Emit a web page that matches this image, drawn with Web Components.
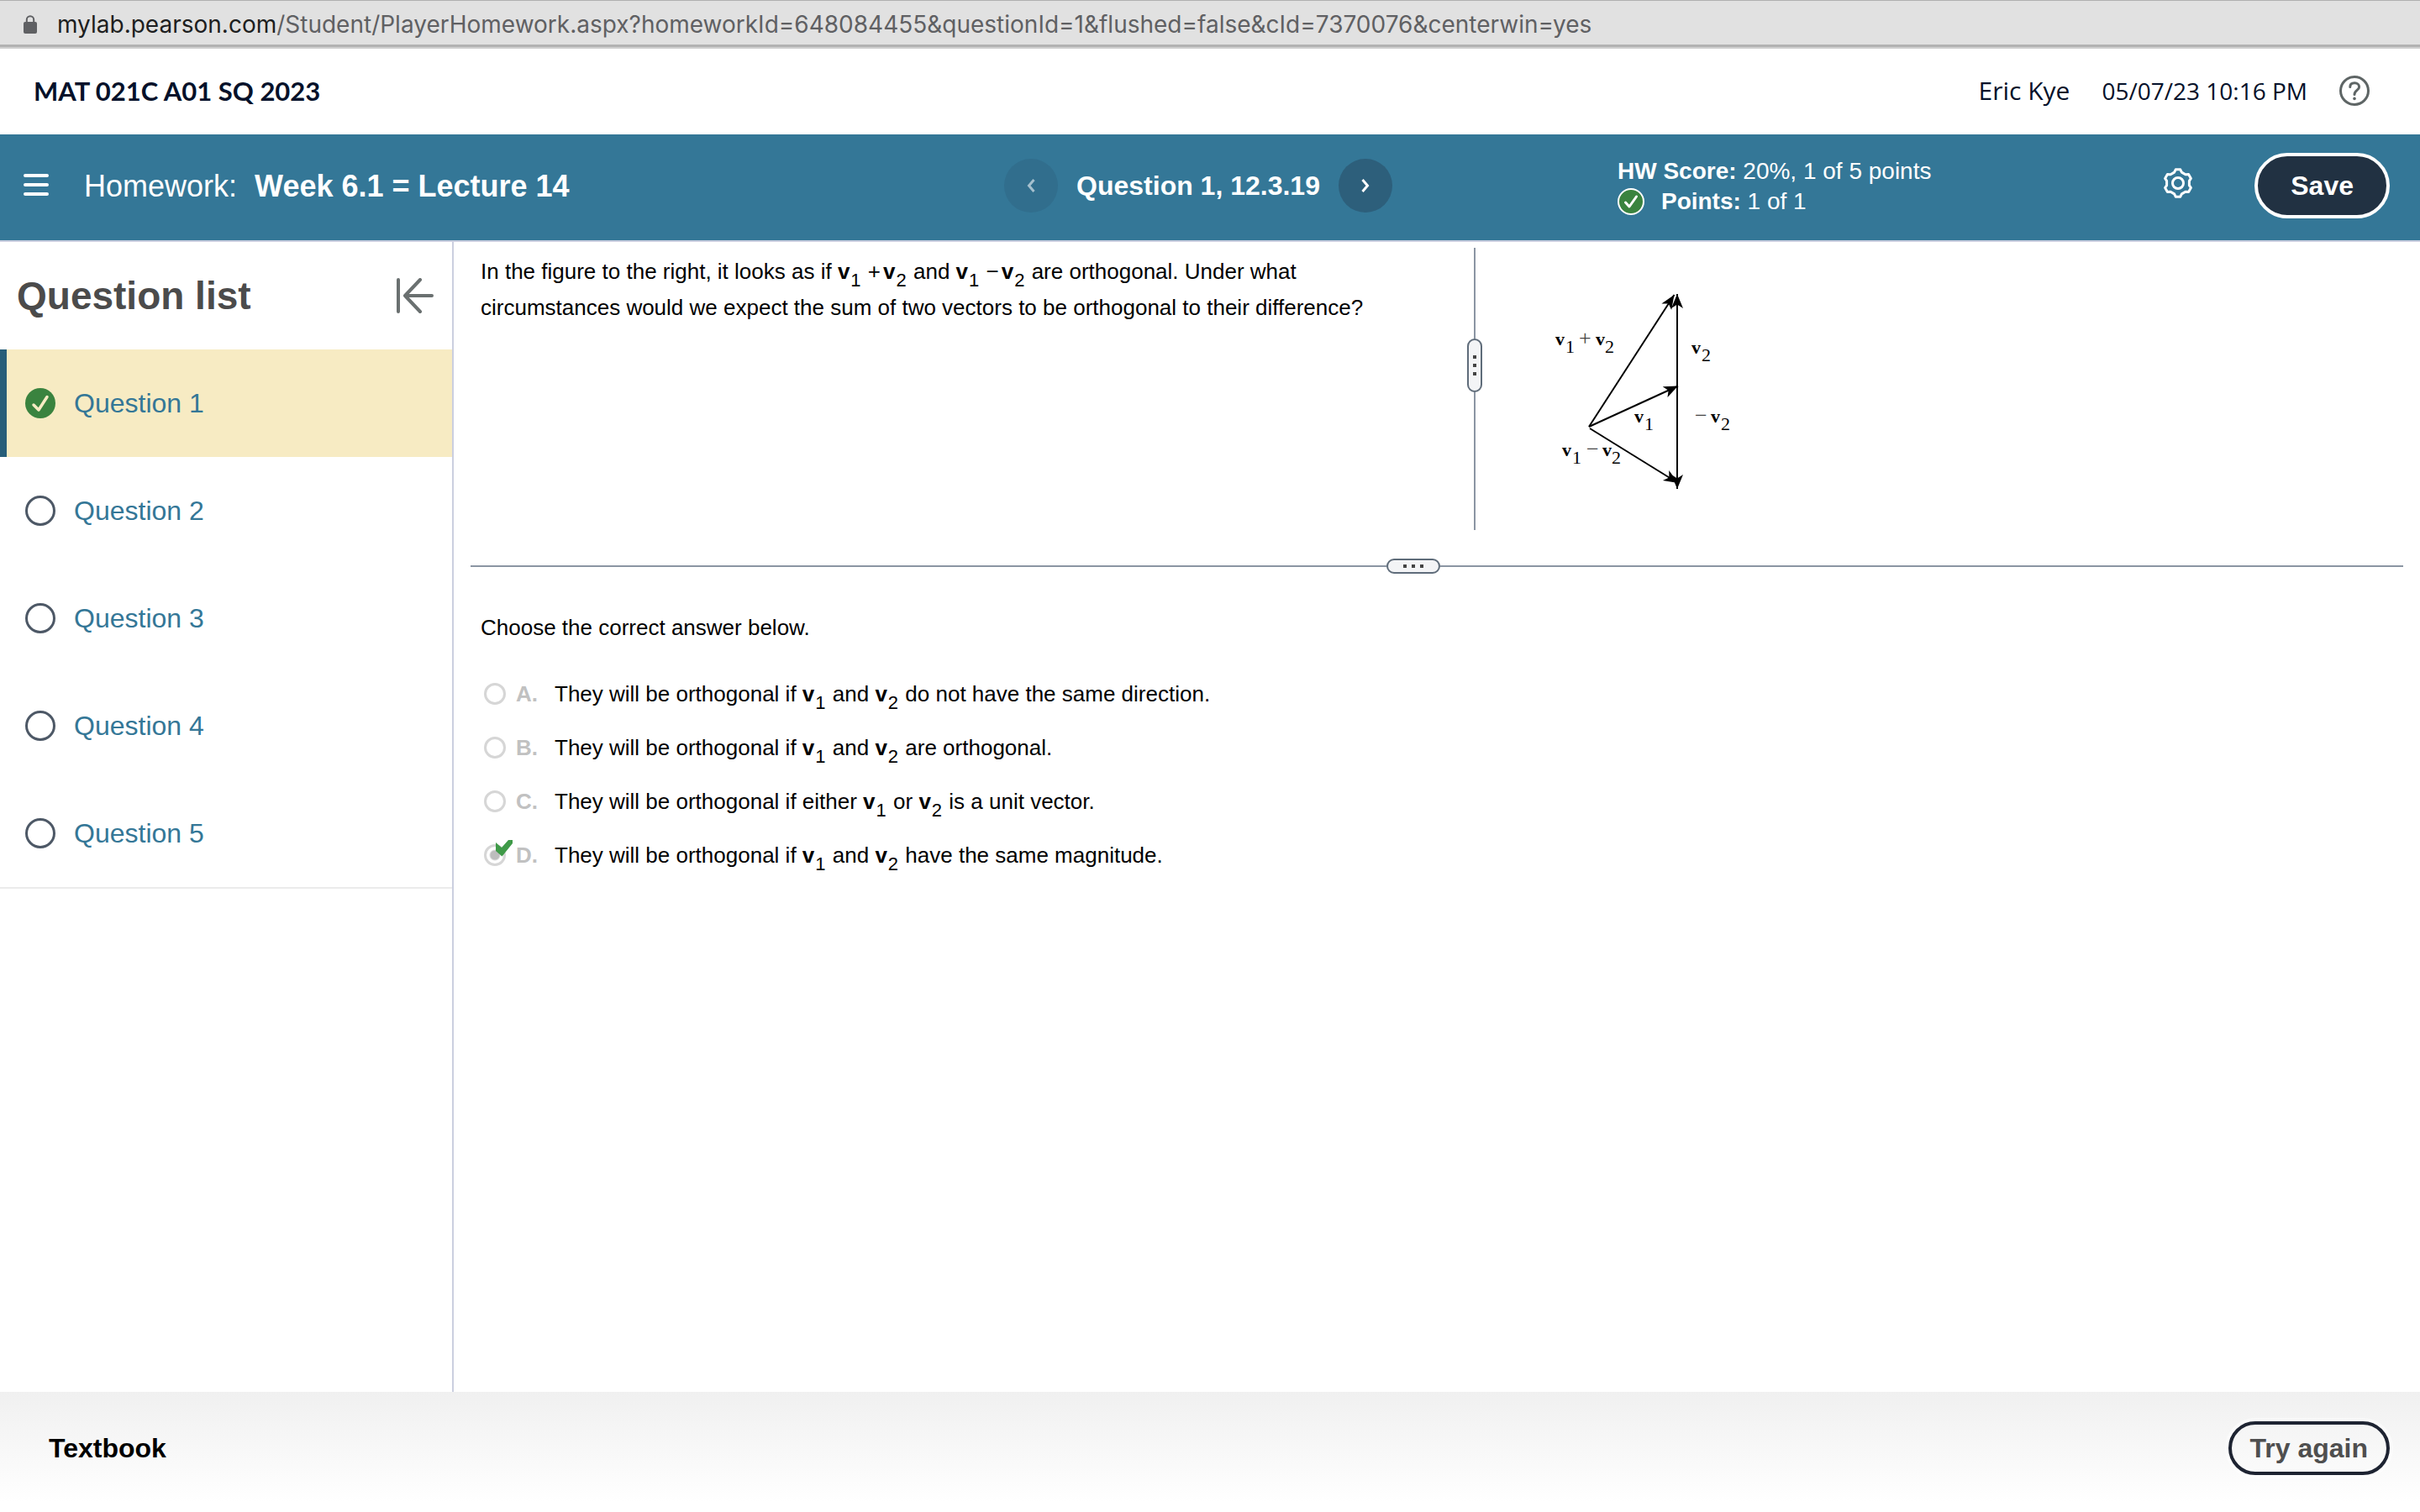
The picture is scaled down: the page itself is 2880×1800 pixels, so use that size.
<!DOCTYPE html>
<html lang="en">
<head>
<meta charset="utf-8">
<title>Homework: Week 6.1 = Lecture 14</title>
<style>
  html, body { margin: 0; }
  body {
    background: #fff;
    color: #000;
    font-family: "Liberation Sans", Arial, sans-serif;
    font-size: 26px;
  }
</style>
</head>
<body>
<homework-player></homework-player>

<script>
const define = (name, html) => {
  const template = document.createElement('template');
  template.innerHTML = html;
  customElements.define(name, class extends HTMLElement {
    constructor() {
      super();
      this.attachShadow({ mode: 'open' }).append(template.content.cloneNode(true));
    }
  });
};

/* Bold vector symbol with its subscript */
define('vec-term', `
  <style>
    :host { display: inline; }
    span { margin: 0 1px; font-size: 22px; line-height: 0; vertical-align: -9px; }
  </style>
  <b>v</b><span><slot></slot></span>`.replace(/\n\s*/g, ''));

define('url-bar', `
  <style>
    :host {
      display: flex; align-items: center; gap: 24px; box-sizing: border-box;
      height: 56px; padding: 3px 0 0 28px;
      background: #e1e1e1; border-top: 1px solid #b0b0b0; border-bottom: 3px solid #b2b2b2;
      font: 28px/36px Inter, sans-serif; color: #5f6063; white-space: nowrap;
    }
    b { font-weight: 400; color: #1d1e20; }
    svg { flex: none; }
  </style>
  <svg width="16" height="22" viewBox="0 0 16 22" aria-hidden="true">
    <path d="M3.8 9V5.5a4.2 4.2 0 0 1 8.4 0V9" fill="none" stroke="#5f6063" stroke-width="2"/>
    <rect y="8" width="16" height="14" rx="2" fill="#5f6063"/>
  </svg>
  <div><b>mylab.pearson.com</b>/Student/PlayerHomework.aspx?homeworkId=648084455&amp;questionId=1&amp;flushed=false&amp;cId=7370076&amp;centerwin=yes</div>`);

define('course-header', `
  <style>
    :host {
      display: flex; align-items: center; gap: 38px; box-sizing: border-box;
      height: 104px; padding: 0 60px 2px 40px; border-top: 2px solid #cfcfcf;
      color: #05112a; font: 28px/40px "Open Sans", sans-serif;
    }
    h1 { flex: 1; margin: 0; font: 700 31px/40px Lato, sans-serif; }
    .user { font-size: 30px; }
    button { display: block; padding: 0; border: 0; background: none; }
    svg { display: block; }
  </style>
  <h1>MAT 021C A01 SQ 2023</h1>
  <span class="user">Eric Kye</span>
  <time datetime="2023-05-07T22:16">05/07/23 10:16 PM</time>
  <button aria-label="Help">
    <svg width="36" height="36" viewBox="0 0 36 36" fill="none" stroke="#5e6565" stroke-width="3">
      <circle cx="18" cy="18" r="16.5"/>
      <path d="M12.8 13.6C12.8 10.4 15 8.8 18.2 8.8S23.6 10.6 23.6 13.4C23.6 17.6 18 17.4 18 22.6" stroke-linecap="round"/>
      <circle cx="18" cy="27.4" r="1.8" fill="#5e6565" stroke="none"/>
    </svg>
  </button>`);

define('step-button', `
  <style>
    :host { display: block; }
    button {
      display: grid; place-items: center; width: 64px; height: 64px; padding: 0;
      border: 0; border-radius: 50%; background: #2d5f7b; color: #fff;
    }
    :host([faded]) button { background: #316e8d; color: #a5c0ce; }
  </style>
  <button><slot></slot></button>`);

const gear = () => {
  const points = [];
  for (let lobe = 0; lobe < 6; lobe++) {
    for (const [offset, radius] of [[-19, 13.6], [-10, 16.4], [10, 16.4], [19, 13.6]]) {
      const angle = (lobe * 60 - 90 + offset) * Math.PI / 180;
      points.push((18 + radius * Math.cos(angle)).toFixed(1) + ',' + (18 + radius * Math.sin(angle)).toFixed(1));
    }
  }
  return points.join(' ');
};

define('assignment-bar', `
  <style>
    :host {
      display: grid; grid-template-columns: 1fr auto 1fr; align-items: center; box-sizing: border-box;
      height: 128px; padding: 0 28px 4px 0;
      background: #347797; border-bottom: 2px solid #cbcfe0; color: #fff;
    }
    .title, nav, .status { display: flex; align-items: center; }
    .title { padding: 2px 0 0 28px; font-size: 36px; line-height: 44px; }
    .title button { margin-right: 42px; }
    h2 { margin: 0 0 0 21px; font-size: 36px; }
    nav { gap: 22px; font-size: 32px; font-weight: 700; }
    .status { padding-right: 8px; }
    .score { margin: 0 auto 0 268px; padding-top: 2px; font-size: 28px; line-height: 36px; }
    .points { display: flex; align-items: center; gap: 20px; }
    .icon { display: block; padding: 0; border: 0; background: none; color: #fff; }
    .gear { margin: 0 73px 6px 0; }
    svg { display: block; }
    .save {
      height: 78px; padding: 0 39px; border: 4px solid #fff; border-radius: 39px;
      background: #213142; color: #fff; font: 700 32px "Liberation Sans", Arial, sans-serif;
    }
  </style>
  <div class="title">
    <button class="icon" aria-label="Menu">
      <svg width="30" height="30" viewBox="0 0 30 30" stroke="#fff" stroke-width="4" stroke-linecap="round">
        <path d="M2 2h26M2 13h26M2 24h26"/>
      </svg>
    </button>
    <span>Homework:</span><h2>Week 6.1 = Lecture 14</h2>
  </div>
  <nav aria-label="Questions">
    <step-button faded><svg width="10" height="16" viewBox="0 0 10 16" fill="none" stroke="currentColor" stroke-width="3"><path d="M8.5 1 2.5 8l6 7"/></svg></step-button>
    <span>Question 1, 12.3.19</span>
    <step-button><svg width="10" height="16" viewBox="0 0 10 16" fill="none" stroke="currentColor" stroke-width="3"><path d="M1.5 1l6 7-6 7"/></svg></step-button>
  </nav>
  <div class="status">
    <div class="score">
      <div><b>HW Score:</b> 20%, 1 of 5 points</div>
      <div class="points">
        <svg width="32" height="32" viewBox="0 0 32 32" fill="none" stroke="#fff">
          <circle cx="16" cy="16" r="15" fill="#3a833f" stroke-width="2"/>
          <path d="M9.5 17l4.5 5L22.5 10" stroke-width="3" stroke-linecap="round" stroke-linejoin="round"/>
        </svg>
        <div><b>Points:</b> 1 of 1</div>
      </div>
    </div>
    <button class="icon gear" aria-label="Settings">
      <svg width="36" height="36" viewBox="0 0 36 36" fill="none" stroke="#fff" stroke-width="3" stroke-linejoin="round">
        <polygon points="${gear()}"/>
        <circle cx="18" cy="18" r="6.5"/>
      </svg>
    </button>
    <button class="save">Save</button>
  </div>`);

define('question-item', `
  <style>
    :host { display: block; }
    a {
      display: flex; align-items: center; gap: 22px; box-sizing: border-box; height: 128px;
      padding-left: 22px; border-left: 8px solid transparent;
      color: #347797; font-size: 32px; text-decoration: none;
    }
    .done { display: none; }
    :host([current]) a { background: #f7ebc3; border-color: #275e79; }
    :host([current]) .done { display: block; }
    :host([current]) .open { display: none; }
  </style>
  <a href="#">
    <svg class="open" width="36" height="36" viewBox="0 0 36 36"><circle cx="18" cy="18" r="16.5" fill="#fff" stroke="#4d5866" stroke-width="3"/></svg>
    <svg class="done" width="36" height="36" viewBox="0 0 36 36"><circle cx="18" cy="18" r="18" fill="#3a833f"/><path d="M10 20l6 6L26 10.5" fill="none" stroke="#f7ebc3" stroke-width="3.5" stroke-linecap="round" stroke-linejoin="round"/></svg>
    <slot></slot>
  </a>`);

define('question-list', `
  <style>
    :host { display: block; box-sizing: border-box; width: 540px; border-right: 2px solid #cbcfe0; }
    header { display: flex; align-items: center; justify-content: space-between; height: 128px; padding: 0 22px 0 20px; }
    h2 { margin: 0; font-size: 46px; color: #4b4b4b; }
    button { padding: 0; border: 0; background: none; }
    svg { display: block; }
    nav { border-bottom: 2px solid #ebebeb; }
  </style>
  <header>
    <h2>Question list</h2>
    <button aria-label="Collapse question list">
      <svg width="44" height="42" viewBox="0 0 44 42" fill="none" stroke="#6a7070" stroke-width="4" stroke-linecap="round" stroke-linejoin="round">
        <path d="M2 2v38M42 21H10M28 2L10 21l18 19"/>
      </svg>
    </button>
  </header>
  <nav aria-label="Question list">
    <question-item current>Question 1</question-item>
    <question-item>Question 2</question-item>
    <question-item>Question 3</question-item>
    <question-item>Question 4</question-item>
    <question-item>Question 5</question-item>
  </nav>`);

/* Draggable divider: a line, a grip with three dots, a line */
define('split-bar', `
  <style>
    :host { display: flex; align-items: center; height: 18px; }
    i { height: 2px; background: #8b95a3; }
    i:first-of-type { flex: 545; }
    i:last-of-type { flex: 573; }
    button {
      display: flex; align-items: center; justify-content: center; gap: 6px; box-sizing: border-box;
      width: 64px; height: 18px; padding: 0;
      border: 2px solid #5f6c7a; border-radius: 9px; background: #f3f4f6;
    }
    span { width: 4px; height: 4px; background: #444; }
    :host([vertical]) { flex-direction: column; width: 18px; height: auto; }
    :host([vertical]) i { width: 2px; height: auto; }
    :host([vertical]) i:first-of-type { flex: 27; }
    :host([vertical]) i:last-of-type { flex: 41; }
    :host([vertical]) button { flex-direction: column; width: 18px; height: 64px; }
  </style>
  <i></i><button aria-label="Resize"><span></span><span></span><span></span></button><i></i>`);

define('vector-figure', `
  <style>
    :host { display: block; }
    svg { display: block; }
    text { font-family: "Liberation Serif", "Times New Roman", serif; font-size: 22px; fill: #000; }
    .b { font-weight: 700; }
    .op { font-size: 26px; fill: #444; }
  </style>
  <svg width="260" height="336" viewBox="0 0 260 336" role="img" aria-label="Vectors v1, v2, their sum and their difference">
    <defs>
      <marker id="tip" markerUnits="userSpaceOnUse" markerWidth="18" markerHeight="16" refX="17" refY="7" orient="auto">
        <path d="M17 7L0 0l4.5 7L0 14z"/>
      </marker>
    </defs>
    <g stroke="#000" stroke-width="2" fill="none">
      <path d="M52 213L153.5 56" marker-end="url(#tip)"/>
      <path d="M52 213L158 164.5" marker-end="url(#tip)"/>
      <path d="M53 215L158 280" marker-end="url(#tip)"/>
      <path d="M157 170V55" marker-end="url(#tip)"/>
      <path d="M157 170V287" marker-end="url(#tip)"/>
    </g>
    <text y="116"><tspan class="b" x="12">v</tspan><tspan x="24" y="125">1</tspan><tspan class="op" x="40" y="116">+</tspan><tspan class="b" x="60">v</tspan><tspan x="71" y="125">2</tspan></text>
    <text y="126"><tspan class="b" x="174">v</tspan><tspan x="186" y="135">2</tspan></text>
    <text y="208"><tspan class="op" x="178">−</tspan><tspan class="b" x="197">v</tspan><tspan x="209" y="217">2</tspan></text>
    <text y="208"><tspan class="b" x="106">v</tspan><tspan x="118" y="217">1</tspan></text>
    <text y="248"><tspan class="b" x="20">v</tspan><tspan x="32" y="257">1</tspan><tspan class="op" x="49" y="248">−</tspan><tspan class="b" x="68">v</tspan><tspan x="79" y="257">2</tspan></text>
  </svg>`);

define('answer-list', `
  <style>
    :host { display: block; }
    fieldset { margin: 0; padding: 0; border: 0; }
    legend { margin-bottom: 25px; padding: 0; line-height: 43px; }
    .row { display: flex; align-items: center; height: 64px; padding-left: 4px; }
    .mark { position: relative; display: flex; }
    input {
      appearance: none; box-sizing: border-box; width: 26px; height: 26px; margin: 0;
      border: 3px solid #d6d6d6; border-radius: 50%; background: #fff;
    }
    input:checked { background: radial-gradient(circle, #bdbdbd 5px, #fff 7px); }
    .mark svg { position: absolute; left: 14px; top: -5px; }
    label { display: flex; line-height: 43px; }
    b { box-sizing: border-box; width: 58px; padding-left: 12px; color: #c1c1c1; }
  </style>
  <fieldset>
    <legend>Choose the correct answer below.</legend>
    <div class="row"><span class="mark"><input type="radio" name="answer" id="a" disabled></span>
      <label for="a"><b>A.</b><span>They will be orthogonal if <vec-term>1</vec-term> and <vec-term>2</vec-term> do not have the same direction.</span></label></div>
    <div class="row"><span class="mark"><input type="radio" name="answer" id="b" disabled></span>
      <label for="b"><b>B.</b><span>They will be orthogonal if <vec-term>1</vec-term> and <vec-term>2</vec-term> are orthogonal.</span></label></div>
    <div class="row"><span class="mark"><input type="radio" name="answer" id="c" disabled></span>
      <label for="c"><b>C.</b><span>They will be orthogonal if either <vec-term>1</vec-term> or <vec-term>2</vec-term> is a unit vector.</span></label></div>
    <div class="row"><span class="mark"><input type="radio" name="answer" id="d" checked disabled>
        <svg width="20" height="20" viewBox="0 0 20 20" aria-hidden="true"><path d="M0 3L7 9 15 0h5v4L7.5 19.5 0 13z" fill="#3f9a48"/></svg></span>
      <label for="d"><b>D.</b><span>They will be orthogonal if <vec-term>1</vec-term> and <vec-term>2</vec-term> have the same magnitude.</span></label></div>
  </fieldset>`);

define('question-panel', `
  <style>
    :host { display: block; flex: 1; padding: 7px 20px 0; }
    .stem { display: grid; grid-template-columns: 593fr 18px 548fr; margin-bottom: 34px; }
    p { margin: 0; padding: 7px 60px 0 12px; line-height: 43px; }
    .op { margin-right: 3px; }
    vector-figure { padding-left: 75px; }
    answer-list { padding: 43px 0 0 12px; }
  </style>
  <div class="stem">
    <p>In the figure to the right, it looks as if <vec-term>1</vec-term> <span class="op">+</span><vec-term>2</vec-term> and <vec-term>1</vec-term> <span class="op">−</span><vec-term>2</vec-term> are orthogonal. Under what <span>circumstances would we expect the sum of two vectors to be orthogonal to their difference?</span></p>
    <split-bar vertical></split-bar>
    <vector-figure></vector-figure>
  </div>
  <split-bar></split-bar>
  <answer-list></answer-list>`);

define('player-footer', `
  <style>
    :host {
      display: flex; align-items: center; justify-content: space-between;
      padding: 35px 36px 44px 58px;
      background: linear-gradient(#f0f0f0, #fff 92%);
    }
    a { color: #000; font-size: 32px; font-weight: 700; text-decoration: none; }
    button {
      height: 64px; padding: 0 22px; border: 4px solid #1e2432; border-radius: 32px;
      background: none; box-shadow: 0 0 0 4px #ffffff80;
      color: #4f4f4f; font: 700 32px "Liberation Sans", Arial, sans-serif;
    }
  </style>
  <a href="#">Textbook</a>
  <button>Try again</button>`);

define('homework-player', `
  <style>
    :host { display: flex; flex-direction: column; min-height: 100vh; }
    main { display: flex; flex: 1; }
  </style>
  <url-bar></url-bar>
  <course-header></course-header>
  <assignment-bar></assignment-bar>
  <main>
    <question-list></question-list>
    <question-panel></question-panel>
  </main>
  <player-footer></player-footer>`);
</script>
</body>
</html>
